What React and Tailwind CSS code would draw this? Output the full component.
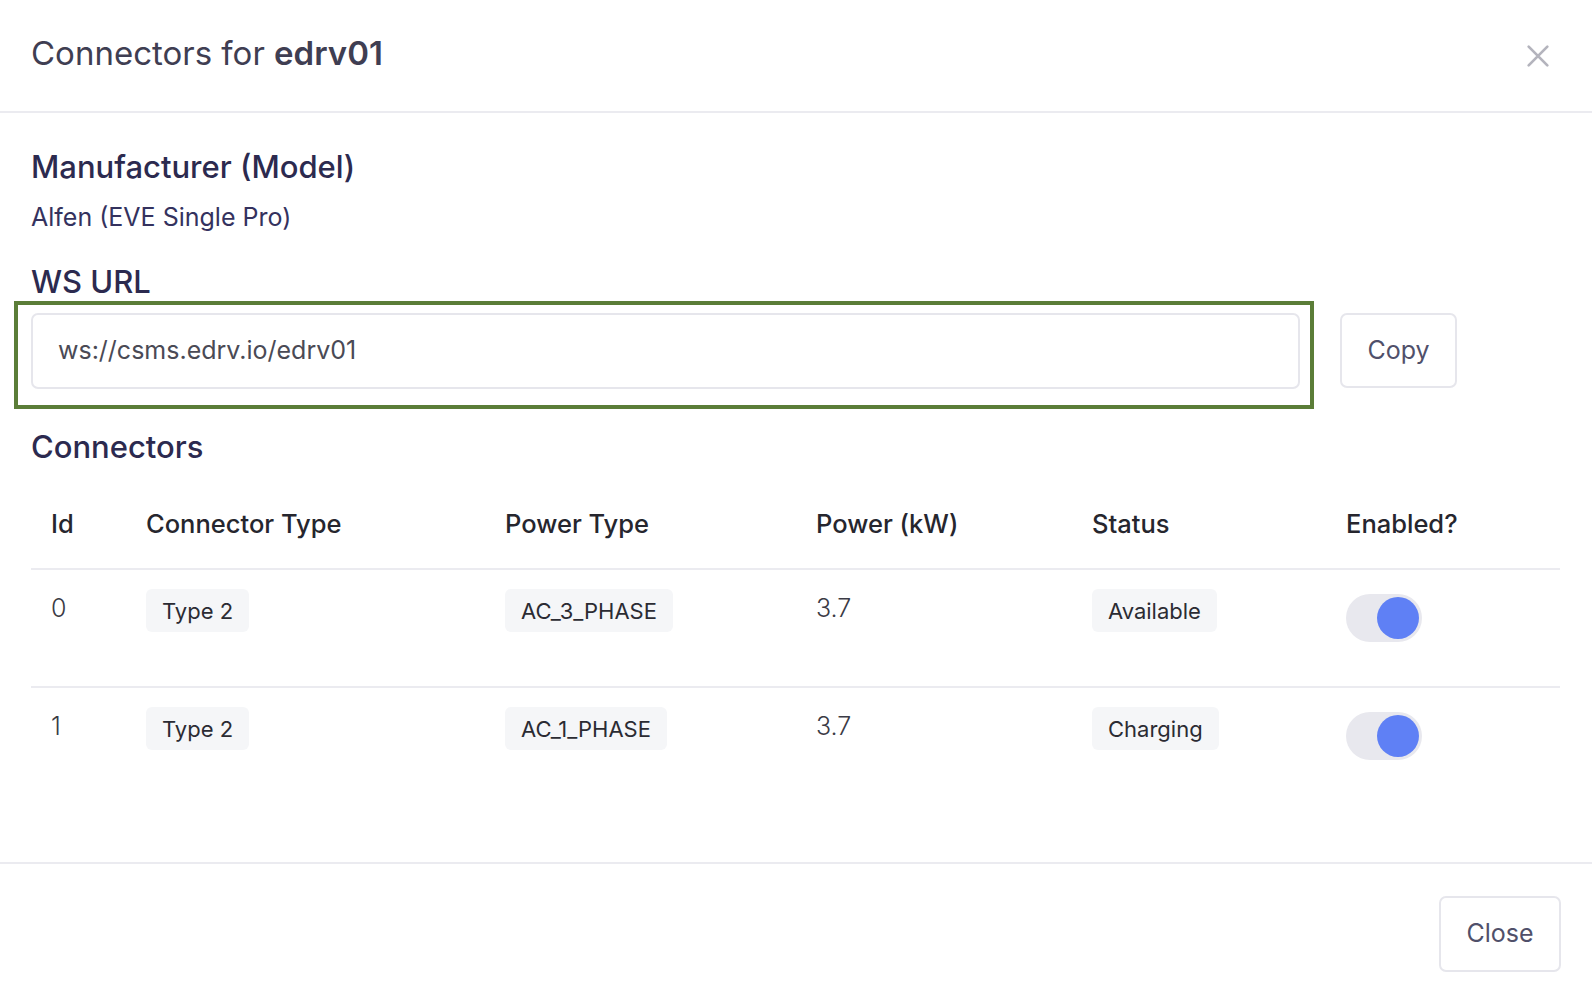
import { useState } from 'react';

const rows = [
  { id: '0', type: 'Type 2', power: 'AC_3_PHASE', kw: '3.7', status: 'Available', enabled: true },
  { id: '1', type: 'Type 2', power: 'AC_1_PHASE', kw: '3.7', status: 'Charging', enabled: true },
];

function Badge({ children }) {
  return (
    <span className="inline-flex items-center h-[43px] px-[16px] rounded-[6px] bg-[#f5f6f8] text-[22px] text-[#2b2b33]">
      {children}
    </span>
  );
}

function Toggle({ on }) {
  return (
    <span className="inline-flex items-center w-[76px] h-[48px] rounded-full bg-[#e8e8ee] px-[3px] justify-end">
      <span className={`block w-[42px] h-[42px] rounded-full ${on ? 'bg-[#5f80f5]' : 'bg-white'}`}></span>
    </span>
  );
}

export default function App() {
  const [items] = useState(rows);
  const cols = 'grid grid-cols-[95px_359px_311px_276px_254px_1fr]';

  return (
    <div className="w-[1592px] h-[1002px] bg-white flex flex-col font-['Inter',sans-serif]">
      <div className="h-[113px] shrink-0 flex items-center justify-between pl-[31px] pr-[40px] border-b-[2px] border-[#ebebf0]">
        <h1 className="text-[33px] text-[#3f3e52] leading-none -mt-[4px]">
          Connectors for <span className="font-semibold">edrv01</span>
        </h1>
        <button className="text-[#b4b4bd]">
          <svg width="28" height="28" viewBox="0 0 24 24" fill="none" stroke="currentColor" strokeWidth="2.3" strokeLinecap="round">
            <path d="M4 4 L20 20 M20 4 L4 20" />
          </svg>
        </button>
      </div>

      <div className="flex-1 px-[31px] pt-[36px]">
        <h2 className="text-[31px] font-medium text-[#2c2a4f] leading-[36px]">Manufacturer (Model)</h2>
        <p className="mt-[16px] text-[25px] text-[#34325e] leading-[32px]">Alfen (EVE Single Pro)</p>

        <h2 className="mt-[31px] text-[31px] font-medium text-[#2c2a4f] leading-[36px]">WS URL</h2>
        <div className="flex items-start mt-[1px]">
          <div className="-ml-[17px] w-[1300px] border-[4px] border-[#5b7d38] pl-[13px] pr-[10px] pt-[8px] pb-[16px]">
            <div className="h-[76px] rounded-[7px] border-[2px] border-[#e6e6ec] flex items-center px-[25px] text-[25px] text-[#4a4a55]">
              ws://csms.edrv.io/edrv01
            </div>
          </div>
          <button className="ml-[26px] mt-[12px] w-[117px] h-[75px] rounded-[7px] border-[2px] border-[#e6e6ec] text-[25px] text-[#50506a]">
            Copy
          </button>
        </div>

        <h2 className="mt-[20px] text-[31px] font-medium text-[#2c2a4f] leading-[36px]">Connectors</h2>

        <div className="mt-[43px] mr-[1px]">
          <div className={`${cols} pb-[28px] border-b-[2px] border-[#ebebf0] text-[25.5px] font-medium text-[#26262e] leading-[32px]`}>
            <div className="pl-[20px]">Id</div>
            <div className="pl-[20px]">Connector Type</div>
            <div className="pl-[20px]">Power Type</div>
            <div className="pl-[20px]">Power (kW)</div>
            <div className="pl-[20px]">Status</div>
            <div className="pl-[20px]">Enabled?</div>
          </div>
          {items.map((r, i) => (
            <div
              key={r.id}
              className={`${cols} pt-[19px] h-[118px] text-[25px] text-[#3b3b45] leading-[32px] ${i < items.length - 1 ? 'border-b-[2px] border-[#ebebf0]' : ''}`}
            >
              <div className="pl-[20px] pt-[3px] font-light">{r.id}</div>
              <div className="pl-[20px]"><Badge>{r.type}</Badge></div>
              <div className="pl-[20px]"><Badge>{r.power}</Badge></div>
              <div className="pl-[20px] pt-[3px] font-light">{r.kw}</div>
              <div className="pl-[20px]"><Badge>{r.status}</Badge></div>
              <div className="pl-[20px] pt-[5px]"><Toggle on={r.enabled} /></div>
            </div>
          ))}
        </div>
      </div>

      <div className="h-[140px] shrink-0 border-t-[2px] border-[#ebebf0] flex items-start justify-end pr-[31px] pt-[32px]">
        <button className="w-[122px] h-[76px] rounded-[7px] border-[2px] border-[#e6e6ec] text-[25px] text-[#50506a]">
          Close
        </button>
      </div>
    </div>
  );
}
